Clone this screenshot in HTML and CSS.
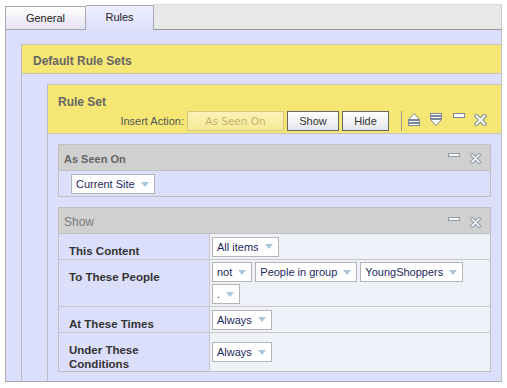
FILE: index.html
```html
<!DOCTYPE html>
<html lang="en">
<head>
    <meta charset="UTF-8">
    <meta name="viewport" content="width=device-width, initial-scale=1.0">
    <title>Rules</title>
    <link rel="stylesheet" href="styles.css">
</head>
<body>
    <div class="tabbar">
        <div class="tab">General</div>
        <div class="tab active">Rules</div>
        <div class="tab-fill"></div>
    </div>

    <div class="panel">
        <div class="group">
            <div class="group-head">Default Rule Sets</div>
            <div class="group-body">
                <div class="ruleset">
                    <div class="ruleset-head">
                        <div class="ruleset-title">Rule Set</div>
                        <div class="toolbar">
                            <span class="toolbar-label">Insert Action:</span>
                            <button type="button" class="btn btn-disabled">As Seen On</button>
                            <button type="button" class="btn btn-show">Show</button>
                            <button type="button" class="btn btn-hide">Hide</button>
                            <span class="sep"></span>
                            <svg class="icon icon-up" width="12" height="13" viewBox="0 0 12 13">
                                <polygon points="6,0.5 11.5,6.5 0.5,6.5" fill="#fff" stroke="#7a8896"/>
                                <rect x="0.5" y="7.5" width="11" height="2" fill="#fff" stroke="#7a8896"/>
                                <rect x="0.5" y="10.5" width="11" height="2" fill="#fff" stroke="#7a8896"/>
                            </svg>
                            <svg class="icon icon-down" width="12" height="13" viewBox="0 0 12 13">
                                <rect x="0.5" y="0.5" width="11" height="2" fill="#fff" stroke="#7a8896"/>
                                <rect x="0.5" y="3.5" width="11" height="2" fill="#fff" stroke="#7a8896"/>
                                <polygon points="0.5,6.5 11.5,6.5 6,12.5" fill="#fff" stroke="#7a8896"/>
                            </svg>
                            <svg class="icon icon-min" width="12" height="5" viewBox="0 0 12 5">
                                <rect x="0.5" y="0.5" width="11" height="4" fill="#fff" stroke="#7a8896"/>
                            </svg>
                            <svg class="icon icon-close" width="13" height="12" viewBox="0 0 13 12">
                                <path d="M2.5 2L10.5 10M10.5 2L2.5 10" stroke="#7a8896" stroke-width="4" stroke-linecap="square"/>
                                <path d="M2.5 2L10.5 10M10.5 2L2.5 10" stroke="#fff" stroke-width="2" stroke-linecap="square"/>
                            </svg>
                        </div>
                    </div>

                    <div class="ruleset-body">
                        <div class="box">
                            <div class="box-head">
                                <span class="box-title">As Seen On</span>
                                <span class="box-tools">
                                    <svg width="12" height="4" viewBox="0 0 12 4">
                                        <rect x="0.5" y="0.5" width="11" height="3" fill="#f8f8f8" stroke="#8d99a5"/>
                                    </svg>
                                    <svg width="11" height="11" viewBox="0 0 11 11">
                                        <path d="M2 2L9 9M9 2L2 9" stroke="#8d99a5" stroke-width="3.6" stroke-linecap="square"/>
                                        <path d="M2 2L9 9M9 2L2 9" stroke="#f8f8f8" stroke-width="1.6" stroke-linecap="square"/>
                                    </svg>
                                </span>
                            </div>
                            <div class="box-body">
                                <span class="sel">Current Site<i class="arrow"></i></span>
                            </div>
                        </div>

                        <div class="box box-show">
                            <div class="box-head">
                                <span class="box-title plain">Show</span>
                                <span class="box-tools">
                                    <svg width="12" height="4" viewBox="0 0 12 4">
                                        <rect x="0.5" y="0.5" width="11" height="3" fill="#f8f8f8" stroke="#8d99a5"/>
                                    </svg>
                                    <svg width="11" height="11" viewBox="0 0 11 11">
                                        <path d="M2 2L9 9M9 2L2 9" stroke="#8d99a5" stroke-width="3.6" stroke-linecap="square"/>
                                        <path d="M2 2L9 9M9 2L2 9" stroke="#f8f8f8" stroke-width="1.6" stroke-linecap="square"/>
                                    </svg>
                                </span>
                            </div>
                            <div class="row">
                                <div class="label">This Content</div>
                                <div class="value">
                                    <span class="sel">All items<i class="arrow"></i></span>
                                </div>
                            </div>
                            <div class="row">
                                <div class="label">To These People</div>
                                <div class="value">
                                    <span class="sel">not<i class="arrow"></i></span>
                                    <span class="sel">People in group<i class="arrow"></i></span>
                                    <span class="sel">YoungShoppers<i class="arrow"></i></span>
                                    <span class="sel">.<i class="arrow"></i></span>
                                </div>
                            </div>
                            <div class="row">
                                <div class="label">At These Times</div>
                                <div class="value">
                                    <span class="sel">Always<i class="arrow"></i></span>
                                </div>
                            </div>
                            <div class="row">
                                <div class="label">Under These<br>Conditions</div>
                                <div class="value">
                                    <span class="sel">Always<i class="arrow"></i></span>
                                </div>
                            </div>
                        </div>
                    </div>
                </div>
            </div>
        </div>
    </div>
</body>
</html>
```

FILE: styles.css
```css
* {
    box-sizing: border-box;
}

body {
    margin: 0;
    font-family: "Liberation Sans", Arial, sans-serif;
    background: #fff;
}

/* tabs */
.tabbar {
    display: flex;
    align-items: flex-end;
    margin: 4px 0 0 5px;
    width: 497px;
    height: 26px;
}

.tab {
    width: 81px;
    height: 24px;
    border: 1px solid #a8a8b0;
    background: linear-gradient(#ffffff, #e4e2f0);
    font-size: 11px;
    line-height: 22px;
    color: #222;
    text-align: center;
}

.tab.active {
    width: 68px;
    height: 25px;
    border-left: none;
    border-bottom: none;
    background: linear-gradient(#eef0ff, #dcdffc);
    line-height: 23px;
}

.tab-fill {
    flex: 1;
    align-self: stretch;
    background: #e8e8e8;
    border-top: 1px solid #d8d8d8;
    border-right: 1px solid #c8c8c8;
    border-bottom: 1px solid #999;
}

/* main panel */
.panel {
    display: flex;
    flex-direction: column;
    margin-left: 5px;
    width: 497px;
    height: 352px;
    border: 1px solid #aaa;
    border-top: none;
    border-right-color: #c4c4c4;
    background: #dcdffc;
    padding: 14px 0 0 15px;
    overflow: hidden;
}

.group {
    flex: 1;
    display: flex;
    flex-direction: column;
    border-left: 1px solid #bbbbc8;
}

.group-head {
    height: 30px;
    padding: 9px 11px 0;
    background: #f6e775;
    border-top: 1px solid #c4c4c4;
    border-bottom: 1px solid #c4c4c4;
    font-size: 12px;
    font-weight: bold;
    line-height: 14px;
    color: #666;
}

.group-body {
    flex: 1;
    display: flex;
    padding: 10px 0 0 25px;
}

.ruleset {
    flex: 1;
    border-left: 1px solid #bbbbc8;
}

.ruleset-head {
    height: 50px;
    padding-top: 10px;
    background: #f6e775;
    border-top: 1px solid #c4c4c4;
    border-bottom: 1px solid #c4c4c4;
}

.ruleset-title {
    padding-left: 10px;
    font-size: 12px;
    font-weight: bold;
    line-height: 14px;
    color: #666;
}

.toolbar {
    display: flex;
    justify-content: flex-end;
    align-items: center;
    height: 20px;
    margin-top: 2px;
    padding-right: 14px;
}

.toolbar-label {
    margin-right: 3px;
    font-size: 11px;
    color: #555;
}

.btn {
    height: 20px;
    margin: 0 0 0 3px;
    padding: 0;
    border: 1px solid #666;
    background: linear-gradient(#ffffff, #e6e6ee);
    font-family: "Liberation Sans", Arial, sans-serif;
    font-size: 11px;
    color: #333;
}

.btn-disabled {
    width: 97px;
    margin-left: 0;
    border-color: #d8c978;
    background: linear-gradient(#fbf3b8, #f5e996);
    font-family: "DejaVu Sans", Verdana, sans-serif;
    font-size: 10.5px;
    color: #c4b46c;
}

.btn-show {
    width: 52px;
}

.btn-hide {
    width: 47px;
}

.sep {
    width: 1px;
    height: 20px;
    margin-left: 12px;
    background: #999;
}

.icon {
    align-self: flex-start;
    margin-top: 2px;
}

.icon-up {
    margin-left: 6px;
}

.icon-down {
    margin-left: 10px;
}

.icon-min {
    margin-left: 11px;
}

.icon-close {
    margin-left: 9px;
    margin-top: 3px;
}

/* inner boxes */
.ruleset-body {
    padding: 10px 10px 0;
}

.box {
    border: 1px solid #c0c0c0;
}

.box-show {
    margin-top: 10px;
}

.box-head {
    display: flex;
    height: 26px;
    padding: 8px 9px 0 5px;
    background: #d0d0d0;
    border-bottom: 1px solid #c0c0c0;
}

.box-title {
    flex: 1;
    font-size: 11px;
    font-weight: bold;
    line-height: 13px;
    color: #666;
}

.box-title.plain {
    margin-top: -1px;
    font-size: 12px;
    font-weight: normal;
    line-height: 14px;
    color: #7a7a7a;
}

.box-tools {
    display: flex;
    align-items: flex-start;
    gap: 10px;
}

.box-show .box-tools {
    margin-top: 1px;
}

.box-body {
    height: 25px;
    padding: 3px 12px;
    background: #dcdffc;
}

/* rows */
.row {
    display: flex;
    border-bottom: 1px solid #c8c8c8;
}

.row:last-child {
    border-bottom: none;
}

.label {
    width: 151px;
    padding: 10px 10px 0;
    background: #dcdffc;
    border-right: 1px solid #c8c8c8;
    font-size: 11.5px;
    font-weight: bold;
    line-height: 14px;
    color: #333;
}

.value {
    flex: 1;
    display: flex;
    flex-wrap: wrap;
    align-items: center;
    align-content: center;
    gap: 2px 3px;
    min-height: 25px;
    padding: 2px;
    background: #eef2f8;
}

.sel {
    display: inline-flex;
    align-items: center;
    height: 20px;
    padding: 0 5px 0 4px;
    border: 1px solid #b4b4b4;
    background: #fff;
    font-size: 11px;
    color: #1b2a5e;
}

.arrow {
    width: 0;
    height: 0;
    margin-left: 6px;
    border-left: 4.5px solid transparent;
    border-right: 4.5px solid transparent;
    border-top: 5px solid #a9c5da;
}
```
